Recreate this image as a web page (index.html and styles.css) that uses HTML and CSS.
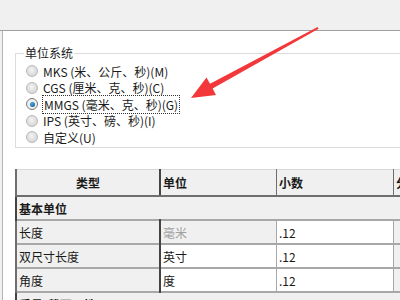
FILE: index.html
```html
<!DOCTYPE html>
<html lang="zh-CN">
<head>
    <meta charset="UTF-8">
    <title>单位</title>
    <link rel="stylesheet" href="styles.css">
</head>
<body>
    <div class="topbar"></div>
    <div class="panel">
        <fieldset class="group">
            <legend>单位系统</legend>
            <label class="radio"><span class="dot"></span>MKS (米、公斤、秒)(M)</label>
            <label class="radio"><span class="dot"></span>CGS (厘米、克、秒)(C)</label>
            <label class="radio checked"><span class="dot"></span><span class="focus">MMGS (毫米、克、秒)(G)</span></label>
            <label class="radio"><span class="dot"></span>IPS (英寸、磅、秒)(I)</label>
            <label class="radio"><span class="dot"></span>自定义(U)</label>
        </fieldset>

        <table class="units">
            <thead>
                <tr>
                    <th class="c1 center">类型</th>
                    <th class="c2">单位</th>
                    <th class="c3">小数</th>
                    <th class="c4">分</th>
                </tr>
            </thead>
            <tbody>
                <tr class="section"><td colspan="4">基本单位</td></tr>
                <tr>
                    <td class="c1 gray">长度</td>
                    <td class="c2 gray muted">毫米</td>
                    <td class="c3">.12</td>
                    <td class="c4 gray"></td>
                </tr>
                <tr>
                    <td class="c1 gray">双尺寸长度</td>
                    <td class="c2">英寸</td>
                    <td class="c3">.12</td>
                    <td class="c4 gray"></td>
                </tr>
                <tr>
                    <td class="c1 gray">角度</td>
                    <td class="c2">度</td>
                    <td class="c3">.12</td>
                    <td class="c4 gray"></td>
                </tr>
                <tr class="section"><td colspan="4">质量/截面属性</td></tr>
            </tbody>
        </table>
    </div>

    <svg class="arrow" width="400" height="300" viewBox="0 0 400 300">
        <polygon points="191,98 216,95 212.6,88.4 318.6,28.8 317.6,27 210,83.8 206.5,77.5" fill="#f2383a"/>
    </svg>
</body>
</html>
```

FILE: styles.css
```css
body {
    margin: 0;
    width: 400px;
    height: 300px;
    overflow: hidden;
    background-color: #f0f0f0;
    font-family: "Noto Sans CJK SC", "DejaVu Sans", sans-serif;
    font-size: 12px;
    color: #1a1a1a;
    position: relative;
}

.topbar {
    height: 30px;
    background-color: #f0f0f0;
    border-bottom: 1px solid #a0a0a0;
}

.panel {
    margin-left: 2px;
    border-left: 1px solid #b4b4b4;
    background-color: #ffffff;
    height: 269px;
    padding-top: 15px;
    padding-left: 12px;
}

.group {
    margin: 0;
    width: 420px;
    height: 97px;
    padding: 3px 0 0 10px;
    border: 1px solid #dcdcdc;
    border-right: none;
}

    .group legend {
        padding: 0 1px;
        margin-left: -2px;
        line-height: 14px;
    }

.radio {
    display: flex;
    align-items: center;
    height: 16.5px;
    white-space: nowrap;
}

    .radio .dot {
        width: 10px;
        height: 10px;
        border-radius: 50%;
        border: 1px solid #b9b9b9;
        background: radial-gradient(circle at 45% 40%, #f4f4f4 0, #d8d8d8 70%, #c8c8c8 100%);
        margin-right: 5px;
        position: relative;
        flex-shrink: 0;
    }

    .radio.checked .dot {
        border-color: #7a7a7a;
        background: #eeeeee;
    }

        .radio.checked .dot::after {
            content: "";
            position: absolute;
            left: 2.5px;
            top: 2.5px;
            width: 5px;
            height: 5px;
            border-radius: 50%;
            background: radial-gradient(circle at 40% 35%, #4aa8e8, #0a4f8a);
        }

.focus {
    outline: 1px dotted #333333;
    padding: 0 1px;
}

.units {
    margin-top: 21px;
    border-collapse: collapse;
    table-layout: fixed;
    width: 440px;
}

    .units th, .units td {
        height: 22px;
        padding: 0 2px;
        text-align: left;
        white-space: nowrap;
        border: 1px solid #a8a8a8;
        border-width: 2px 1px 0 1px;
    }

    .units th {
        height: 25px;
        background-color: #f0f0f0;
        font-weight: bold;
        border: 1px solid #6e6e6e;
        border-bottom-width: 2px;
        border-top-color: #d8d8d8;
    }

    .units .center {
        text-align: center;
    }

    .units .c1 {
        width: 138px;
        border-left: 2px solid #6e6e6e;
        border-right: 2px solid #444444;
    }

    .units .c2 {
        width: 111px;
    }

    .units .c3 {
        width: 112px;
    }

    .units .gray {
        background-color: #f0f0f0;
    }

    .units .muted {
        color: #a0a0a0;
    }

    .units .section td {
        background-color: #f0f0f0;
        font-weight: bold;
        border-left: 2px solid #444444;
    }

.arrow {
    position: absolute;
    left: 0;
    top: 0;
    pointer-events: none;
}
```
